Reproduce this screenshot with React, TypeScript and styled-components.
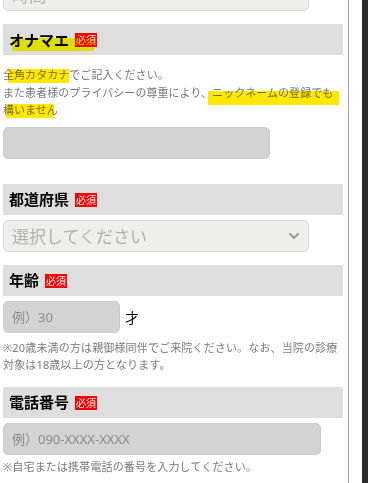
import React from 'react';
import styled, { createGlobalStyle } from 'styled-components';

const GlobalStyle = createGlobalStyle`
  html, body {
    margin: 0;
    padding: 0;
    background: #ffffff;
    overflow: hidden;
  }
  body {
    font-family: 'Noto Sans', 'Noto Sans CJK JP', sans-serif;
  }
`;

interface MarkerProps {
  $l: number;
  $r: number;
  $top: number;
  $bottom: number;
}

interface FieldProps {
  $width: number;
  $mt?: number;
}

const ChevronIcon: React.FC = () => (
  <svg width="10" height="6" viewBox="0 0 10 6" fill="none">
    <path d="M1 1l4 4 4-4" stroke="#9a9a9a" strokeWidth="2" strokeLinecap="round" />
  </svg>
);

const Heading: React.FC<{ label: string; marked?: boolean; mt: number }> = ({
  label,
  marked,
  mt,
}) => (
  <HeadBar $mt={mt}>
    <HeadLabel $marked={!!marked}>
      <HeadText>{label}</HeadText>
      <Required>必須</Required>
    </HeadLabel>
  </HeadBar>
);

const App: React.FC = () => {
  return (
    <>
      <GlobalStyle />
      <Screen>
        <Form>
          <SelectBox $width={306} $mt={-21}>
            <SelectText>時間</SelectText>
            <ChevronIcon />
          </SelectBox>

          <Heading label="オナマエ" marked mt={13} />
          <Description>
            <Marker $l={5} $r={0} $top={3} $bottom={-1}>
              全角カタカナ
            </Marker>
            でご記入ください。
            <br />
            また患者様のプライバシーの尊重により、
            <Marker $l={-4} $r={-6} $top={7} $bottom={-5}>
              ニックネームの登録でも
            </Marker>
            <br />
            <Marker $l={3} $r={4} $top={3} $bottom={-1}>
              構いません
            </Marker>
          </Description>
          <TextField $width={267} $mt={8} />

          <Heading label="都道府県" mt={25} />
          <SelectBox $width={306} $mt={5}>
            <SelectText>選択してください</SelectText>
            <ChevronIcon />
          </SelectBox>

          <Heading label="年齢" mt={13} />
          <AgeRow>
            <TextField $width={117}>
              <Placeholder>例）30</Placeholder>
            </TextField>
            <Unit>才</Unit>
          </AgeRow>
          <Note $mt={6}>
            ※20歳未満の方は親御様同伴でご来院ください。なお、当院の診療
            <br />
            対象は18歳以上の方となります。
          </Note>

          <Heading label="電話番号" mt={14} />
          <TextField $width={318} $mt={5}>
            <Placeholder>例）090-XXXX-XXXX</Placeholder>
          </TextField>
          <Note $mt={3}>※自宅または携帯電話の番号を入力してください。</Note>
        </Form>
        <Gutter />
        <ScrollStrip />
      </Screen>
    </>
  );
};

export default App;

const Screen = styled.div`
  display: flex;
  width: 100%;
  height: 100vh;
  overflow: hidden;
`;

const Form = styled.main`
  width: 340px;
  padding: 0 5px 0 3px;
  border-right: 1px solid #a6a6a6;
  display: flex;
  flex-direction: column;
  align-items: flex-start;
`;

const Gutter = styled.div`
  flex: 1;
  background: #ffffff;
`;

const ScrollStrip = styled.div`
  width: 6px;
  background: #2b2b2b;
`;

const HeadBar = styled.div<{ $mt: number }>`
  align-self: stretch;
  height: 31px;
  margin-top: ${({ $mt }) => $mt}px;
  padding-left: 6px;
  display: flex;
  align-items: center;
  background: #dedede;
`;

const HeadLabel = styled.div<{ $marked: boolean }>`
  position: relative;
  height: 20px;
  display: flex;
  align-items: center;
  gap: 6px;

  &::after {
    content: '';
    display: ${({ $marked }) => ($marked ? 'block' : 'none')};
    position: absolute;
    left: 3px;
    right: 3px;
    top: 8px;
    bottom: -1px;
    background: #ffff00;
    mix-blend-mode: multiply;
    pointer-events: none;
  }
`;

const HeadText = styled.h3`
  margin: 0;
  font-family: 'Noto Sans CJK JP', sans-serif;
  font-size: 15px;
  line-height: 20px;
  font-weight: 700;
  color: #000000;
`;

const Required = styled.span`
  display: inline-flex;
  align-items: center;
  justify-content: center;
  width: 22px;
  height: 14px;
  margin-top: 1px;
  background: #ff0000;
  color: #ffffff;
  font-family: 'Noto Sans CJK JP', sans-serif;
  font-size: 10px;
  line-height: 1;
`;

const Marker = styled.span<MarkerProps>`
  position: relative;

  &::after {
    content: '';
    position: absolute;
    left: ${({ $l }) => $l}px;
    right: ${({ $r }) => $r}px;
    top: ${({ $top }) => $top}px;
    bottom: ${({ $bottom }) => $bottom}px;
    background: #ffe800;
    mix-blend-mode: multiply;
    pointer-events: none;
  }
`;

const Description = styled.p`
  margin: 11px 0 0;
  font-family: 'Noto Sans CJK JP', sans-serif;
  font-size: 11px;
  line-height: 17.5px;
  letter-spacing: 0.05px;
  color: #777777;
  white-space: nowrap;
`;

const Note = styled.p<{ $mt: number }>`
  margin: ${({ $mt }) => $mt}px 0 0;
  font-size: 11px;
  line-height: 17px;
  letter-spacing: 0.15px;
  color: #7a7a7a;
  white-space: nowrap;
`;

const SelectBox = styled.div<FieldProps>`
  box-sizing: border-box;
  width: ${({ $width }) => $width}px;
  height: 32px;
  margin-top: ${({ $mt }) => $mt ?? 0}px;
  padding: 0 9px 0 8px;
  display: flex;
  align-items: center;
  justify-content: space-between;
  background: #efefea;
  border: 1px solid #d9d9d4;
  border-radius: 5px;
`;

const SelectText = styled.span`
  font-family: 'Noto Sans CJK JP', sans-serif;
  font-size: 17px;
  line-height: 22px;
  color: #b2b2ae;
`;

const TextField = styled.div<FieldProps>`
  box-sizing: border-box;
  width: ${({ $width }) => $width}px;
  height: 32px;
  margin-top: ${({ $mt }) => $mt ?? 0}px;
  padding: 0 8px;
  display: flex;
  align-items: center;
  background: #d3d3d3;
  border: 1px solid #cbcbcb;
  border-radius: 5px;
`;

const Placeholder = styled.span`
  font-size: 13px;
  color: #8c8c8c;
`;

const AgeRow = styled.div`
  margin-top: 5px;
  display: flex;
  align-items: center;
  gap: 5px;
`;

const Unit = styled.span`
  font-family: 'Noto Sans CJK JP', sans-serif;
  font-size: 14px;
  color: #000000;
`;
